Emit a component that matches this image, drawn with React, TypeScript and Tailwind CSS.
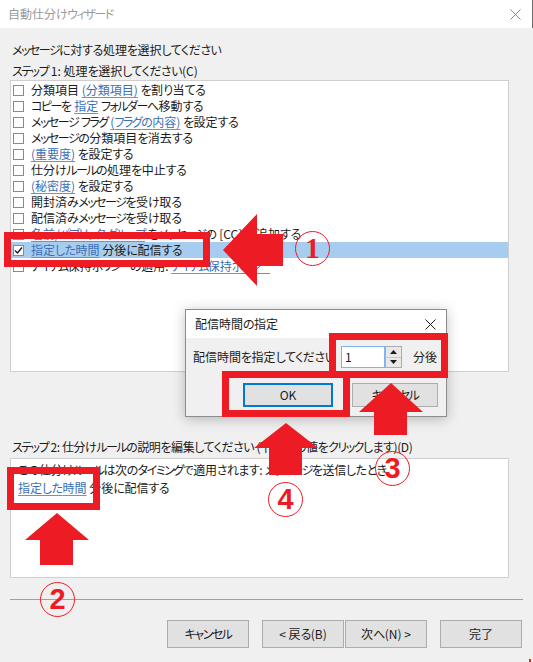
import React from "react";

type Part = { t: string; link?: boolean };

const rows: Part[][] = [
    [{ t: "分類項目 " }, { t: "(分類項目)", link: true }, { t: " を割り当てる" }],
    [{ t: "コピーを " }, { t: "指定", link: true }, { t: " フォルダーへ移動する" }],
    [{ t: "メッセージ フラグ " }, { t: "(フラグの内容)", link: true }, { t: " を設定する" }],
    [{ t: "メッセージの分類項目を消去する" }],
    [{ t: "(重要度)", link: true }, { t: " を設定する" }],
    [{ t: "仕分けルールの処理を中止する" }],
    [{ t: "(秘密度)", link: true }, { t: " を設定する" }],
    [{ t: "開封済みメッセージを受け取る" }],
    [{ t: "配信済みメッセージを受け取る" }],
    [{ t: "名前/パブリック グループ", link: true }, { t: " をメッセージの [CC] に追加する" }],
    [{ t: "指定した時間", link: true }, { t: " 分後に配信する" }],
    [{ t: "アイテム保持ポリシーの適用: " }, { t: "アイテム保持ポリシー", link: true }],
];

const font = "font-['Noto_Sans_CJK_JP','Noto_Sans',sans-serif] [font-feature-settings:'palt']";

// kana in the original UI font is narrower than Noto's, tighten those runs
function K({ s }: { s: string }) {
    return (
        <>
            {s.split(/([\u30A0-\u30FF]+|[\u3040-\u309F]+)/).map((seg, i) =>
                /[\u30A0-\u30FF]/.test(seg) ? (
                    <span key={i} className="tracking-[-1.5px]">
                        {seg}
                    </span>
                ) : /[\u3040-\u309F]/.test(seg) ? (
                    <span key={i} className="tracking-[-0.5px]">
                        {seg}
                    </span>
                ) : (
                    <React.Fragment key={i}>{seg}</React.Fragment>
                )
            )}
        </>
    );
}

function Text({ parts }: { parts: Part[] }) {
    return (
        <span className="whitespace-pre">
            {parts.map((p, i) =>
                p.link ? (
                    <span key={i} className="text-[#3a6fb5] underline underline-offset-2 decoration-[#6c93c9]">
                        <K s={p.t} />
                    </span>
                ) : (
                    <K key={i} s={p.t} />
                )
            )}
        </span>
    );
}

function CheckBox({ checked }: { checked?: boolean }) {
    return (
        <div className="w-[11px] h-[11px] border border-[#8a8a8a] bg-white flex items-center justify-center">
            {checked && (
                <svg width="9" height="9" viewBox="0 0 9 9">
                    <path d="M1 4.5 L3.5 7 L8 1.5" fill="none" stroke="#1b1b1b" strokeWidth="1.4" />
                </svg>
            )}
        </div>
    );
}

function Btn({ label, className }: { label: string; className?: string }) {
    return (
        <div
            className={`h-[28px] bg-[#e1e1e1] border border-[#adadad] flex items-center justify-center text-[12px] text-[#1b1b1b] ${className}`}
        >
            <K s={label} />
        </div>
    );
}

function Circled({ n, className, serif }: { n: string; className: string; serif?: boolean }) {
    return (
        <div
            className={`absolute w-[35px] h-[35px] rounded-full border-[1.5px] border-[#ed1c24] flex items-center justify-center text-[#ed1c24] font-bold text-[29px] leading-none ${className} ${
                serif ? "font-['Liberation_Serif',serif]" : "font-['Liberation_Sans',sans-serif]"
            }`}
        >
            {n}
        </div>
    );
}

function UpArrow({ className, head }: { className: string; head: number }) {
    return (
        <svg className={`absolute ${className}`} width="64" height="52" viewBox="0 0 64 52">
            <polygon points={`32,0 64,${head} 48,${head} 48,52 15,52 15,${head} 0,${head}`} fill="#ed1c24" />
        </svg>
    );
}

function RedBox({ className }: { className: string }) {
    return <div className={`absolute border-[7px] border-[#ed1c24] ${className}`} />;
}

export default function App() {
    return (
        <div className={`relative w-[533px] h-[662px] bg-[#f0f0f0] overflow-hidden text-[12px] text-[#1b1b1b] ${font}`}>
            {/* title bar */}
            <div className="h-[28px] bg-white flex items-center justify-between pl-[8px] pr-[11px] border-r border-[#6b6b6b]">
                <span className="text-[#9a9a9a] leading-none">
                    <K s="自動仕分けウィザード" />
                </span>
                <svg width="11" height="11" viewBox="0 0 11 11">
                    <path d="M0.5 0.5 L10.5 10.5 M10.5 0.5 L0.5 10.5" stroke="#8a8a8a" strokeWidth="1" />
                </svg>
            </div>

            <div className="pl-[10px] pr-[24px] flex flex-col">
                <div className="mt-[14px] leading-[16px] pl-[2px]">
                    <K s="メッセージに対する処理を選択してください" />
                </div>
                <div className="mt-[5px] leading-[16px] pl-[2px]">
                    <K s="ステップ 1: 処理を選択してください(C)" />
                </div>

                <div className="mt-[1px] h-[292px] bg-white border border-[#cfcfcf] pt-[1px]">
                    {rows.map((r, i) => (
                        <div
                            key={i}
                            className={`h-[16px] flex items-center gap-[7px] pl-[2px] leading-[16px] ${
                                i === 10 ? "bg-[#a6cdf0]" : ""
                            }`}
                        >
                            <CheckBox checked={i === 10} />
                            <Text parts={r} />
                        </div>
                    ))}
                </div>

                <div className="mt-[67px] leading-[16px] pl-[2px] tracking-[-0.4px]">
                    <K s="ステップ 2: 仕分けルールの説明を編集してください (下線部の値をクリックします)(D)" />
                </div>
                <div className="mt-[3px] h-[120px] bg-white border border-[#cfcfcf] px-[7px] pt-[2px] leading-[18px]">
                    <div className="tracking-[-0.3px]">
                        <K s="この仕分けルールは次のタイミングで適用されます: メッセージを送信したとき" />
                    </div>
                    <Text parts={[{ t: "指定した時間", link: true }, { t: " 分後に配信する" }]} />
                </div>
            </div>

            <div className="mx-[10px] mt-[21px] h-px bg-[#a0a0a0]" />

            <div className="mt-[20px] flex justify-end pr-[11px]">
                <Btn label="キャンセル" className="w-[82px]" />
                <Btn label="< 戻る(B)" className="w-[82px] ml-[13px]" />
                <Btn label="次へ(N) >" className="w-[82px] ml-[1px]" />
                <Btn label="完了" className="w-[82px] ml-[13px]" />
            </div>

            {/* sub dialog */}
            <div className="absolute left-[185px] top-[309px] w-[262px] h-[108px] bg-[#f0f0f0] border border-[#8c8c8c] shadow-[0_2px_12px_rgba(0,0,0,0.25)] flex flex-col">
                <div className="h-[28px] bg-white flex items-center justify-between pl-[9px] pr-[10px]">
                    <span className="leading-none">
                        <K s="配信時間の指定" />
                    </span>
                    <svg width="11" height="11" viewBox="0 0 11 11">
                        <path d="M0.5 0.5 L10.5 10.5 M10.5 0.5 L0.5 10.5" stroke="#1b1b1b" strokeWidth="1" />
                    </svg>
                </div>
                <div className="mt-[8px] flex items-center h-[22px] pl-[7px]">
                    <span className="w-[148px] leading-none">
                        <K s="配信時間を指定してください" />
                    </span>
                    <div className="w-[44px] h-[22px] bg-white border border-[#7eb4ea] flex items-center pl-[3px]">1</div>
                    <div className="w-[17px] h-[22px] flex flex-col border border-[#adadad] bg-[#e8e8e8]">
                        <div className="flex-1 flex items-center justify-center border-b border-[#c8c8c8]">
                            <svg width="7" height="4" viewBox="0 0 7 4">
                                <polygon points="3.5,0 7,4 0,4" fill="#1b1b1b" />
                            </svg>
                        </div>
                        <div className="flex-1 flex items-center justify-center">
                            <svg width="7" height="4" viewBox="0 0 7 4">
                                <polygon points="0,0 7,0 3.5,4" fill="#1b1b1b" />
                            </svg>
                        </div>
                    </div>
                    <span className="ml-[11px] leading-none">分後</span>
                </div>
                <div className="mt-[15px] flex pl-[57px]">
                    <div className="w-[90px] h-[24px] bg-[#e1e1e1] border-2 border-[#0078d7] flex items-center justify-center">OK</div>
                    <div className="ml-[19px] w-[86px] h-[24px] bg-[#e1e1e1] border border-[#adadad] flex items-center justify-center">
                        <K s="キャンセル" />
                    </div>
                </div>
            </div>

            {/* annotations */}
            <RedBox className="left-[4px] top-[232px] w-[206px] h-[35px]" />
            <RedBox className="left-[7px] top-[467px] w-[93px] h-[43px]" />
            <RedBox className="left-[329px] top-[333px] w-[119px] h-[45px]" />
            <RedBox className="left-[222px] top-[371px] w-[128px] h-[46px]" />

            <svg className="absolute left-[223px] top-[214px]" width="60" height="72" viewBox="0 0 60 72">
                <polygon points="0,36 34,0 34,20 60,20 60,52 34,52 34,72" fill="#ed1c24" />
            </svg>
            <UpArrow className="left-[359px] top-[383px]" head={29} />
            <UpArrow className="left-[254px] top-[423px]" head={25} />
            <UpArrow className="left-[25px] top-[513px]" head={27} />

            <Circled n="1" serif className="left-[295px] top-[231px]" />
            <Circled n="3" className="left-[375px] top-[451px]" />
            <Circled n="4" className="left-[268px] top-[482px]" />
            <Circled n="2" className="left-[40px] top-[582px]" />

            <div className="absolute right-[2px] bottom-0 w-[2px] h-[3px] bg-[#ed1c24]" />
        </div>
    );
}
